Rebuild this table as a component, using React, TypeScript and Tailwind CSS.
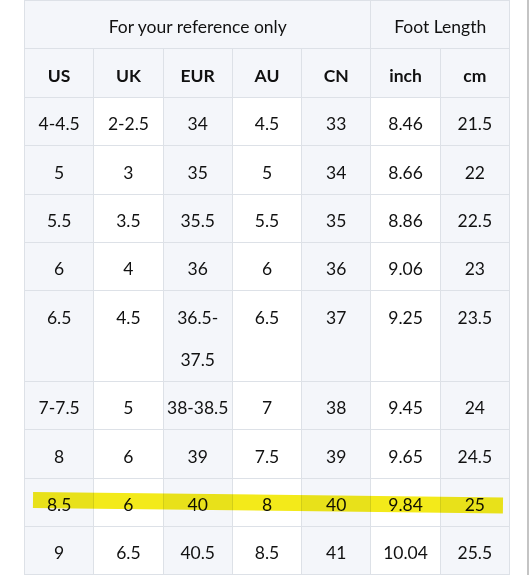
const rows: string[][] = [
  ['4-4.5', '2-2.5', '34', '4.5', '33', '8.46', '21.5'],
  ['5', '3', '35', '5', '34', '8.66', '22'],
  ['5.5', '3.5', '35.5', '5.5', '35', '8.86', '22.5'],
  ['6', '4', '36', '6', '36', '9.06', '23'],
  ['6.5', '4.5', '36.5-37.5', '6.5', '37', '9.25', '23.5'],
  ['7-7.5', '5', '38-38.5', '7', '38', '9.45', '24'],
  ['8', '6', '39', '7.5', '39', '9.65', '24.5'],
  ['8.5', '6', '40', '8', '40', '9.84', '25'],
  ['9', '6.5', '40.5', '8.5', '41', '10.04', '25.5'],
]

const heads = ['US', 'UK', 'EUR', 'AU', 'CN', 'inch', 'cm']

const cell =
  'border border-[#dde1e7] px-[2px] pt-[5.4px] pb-0 text-center align-top leading-[42px]'

export default function App() {
  return (
    <div
      className="h-[575px] w-[531px] overflow-hidden bg-white"
      style={{ fontFamily: 'Lato, "Open Sans", sans-serif' }}
    >
      <div className="relative h-full w-[529px] border-r-2 border-[#c4c4c4] pl-[24px]">
        <table className="w-[486px] table-fixed border-collapse text-[17.5px] text-[#111111]">
          <thead>
            <tr className="bg-[#f4f6fa]">
              <th colSpan={5} className={`${cell} font-normal`}>
                For your reference only
              </th>
              <th colSpan={2} className={`${cell} font-normal`}>
                Foot Length
              </th>
            </tr>
            <tr className="bg-[#f4f6fa]">
              {heads.map((h) => (
                <th key={h} className={`${cell} font-bold`}>
                  {h}
                </th>
              ))}
            </tr>
          </thead>
          <tbody>
            {rows.map((row, i) => (
              <tr key={i}>
                {row.map((v, j) => (
                  <td key={j} className={`${cell} ${j % 2 === 0 ? 'bg-[#f4f6fa]' : 'bg-white'}`}>
                    {v}
                  </td>
                ))}
              </tr>
            ))}
          </tbody>
        </table>

        {/* highlighter stroke over the 8.5 row */}
        <div className="pointer-events-none absolute left-[33px] top-[492px] h-[16px] w-[470px] origin-left rotate-[0.67deg] bg-[#f3ea1a] mix-blend-multiply" />
      </div>
    </div>
  )
}
